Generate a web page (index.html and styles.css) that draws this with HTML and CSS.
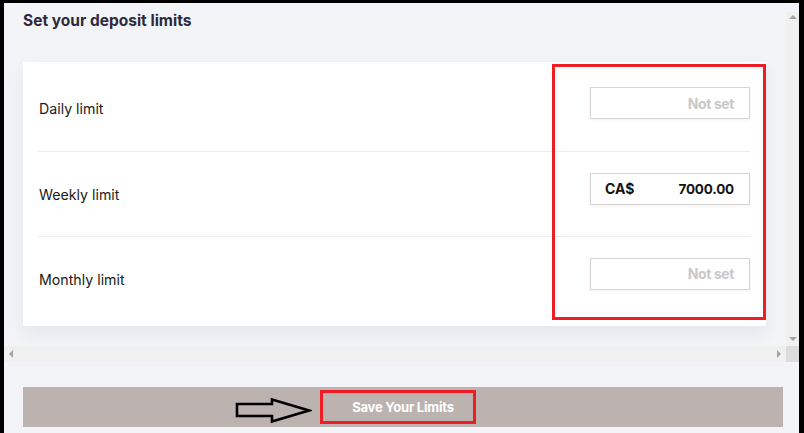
FILE: index.html
```html
<!doctype html>
<html lang="en">
  <head>
    <meta charset="utf-8">
    <title>Deposit limits</title>
    <link rel="stylesheet" href="styles.css">
  </head>
  <body>
    <div class="frame">
      <div class="scroller">
        <div class="viewport">
          <h2 class="title">Set your deposit limits</h2>

          <div class="card">
            <div class="row">
              <span class="label">Daily limit</span>
              <div class="field empty"><span class="value">Not set</span></div>
            </div>
            <div class="row">
              <span class="label">Weekly limit</span>
              <div class="field">
                <span class="currency">CA$</span>
                <span class="value">7000.00</span>
              </div>
            </div>
            <div class="row">
              <span class="label">Monthly limit</span>
              <div class="field empty"><span class="value">Not set</span></div>
            </div>
            <!-- annotation -->
            <div class="mark mark-fields"></div>
          </div>
        </div>

        <div class="vbar">
          <span class="arrow up"></span>
          <span class="arrow down"></span>
        </div>
        <div class="hbar">
          <span class="arrow left"></span>
          <span class="arrow right"></span>
        </div>
        <div class="corner"></div>
      </div>

      <div class="save">
        <svg class="pointer" width="77" height="25" viewBox="0 0 77 25">
          <polygon points="2,6 37,6 37,1.5 74,12.5 37,23.5 37,18 2,18" fill="none" stroke="#000" stroke-width="2.6" stroke-linejoin="miter"/>
        </svg>
        <span class="save-text">Save Your Limits</span>
        <div class="mark mark-save"></div>
      </div>
    </div>
  </body>
</html>
```

FILE: styles.css
```css
html {
  margin: 0;
  --page-bg: #f3f4f8;
  --bar-bg: #f0f0f0;
  --mark: #ee1c25;
}

body {
  margin: 0;
  background-color: #eef0f3;
  font-family: Inter, "Liberation Sans", sans-serif;
  -webkit-font-smoothing: antialiased;
}

.frame {
  height: 423px;
  border-style: solid;
  border-color: #000;
  border-width: 3px 5px 4px 4px;
  background-color: var(--page-bg);
  padding-top: 9px;
  box-sizing: content-box;
  overflow: hidden;
  display: flex;
  flex-direction: column;
}

.scroller {
  height: 350px;
  flex: none;
  display: grid;
  grid-template-columns: 1fr 13px;
  grid-template-rows: 1fr 16px;
}

.viewport {
  overflow: hidden;
  padding-left: 19px;
}

.title {
  margin: 0;
  height: 18px;
  line-height: 18px;
  font-size: 15.5px;
  font-weight: 700;
  color: #2e2a3d;
  letter-spacing: 0;
}

.card {
  position: relative;
  width: 743px;
  height: 264px;
  margin-top: 32px;
  box-sizing: border-box;
  padding: 4px 16px 5px 15px;
  background-color: #fff;
  box-shadow: 0 8px 18px rgba(40, 44, 70, 0.07);
}

.row {
  height: 85px;
  box-sizing: border-box;
  display: flex;
  align-items: center;
  justify-content: space-between;
}

.row + .row {
  border-top: 1px solid #ececec;
}

.label {
  font-size: 14.2px;
  color: #1a1a20;
  padding-left: 1px;
}

.field {
  width: 160px;
  height: 32px;
  margin-bottom: 11px;
  box-sizing: border-box;
  border: 1px solid #dad3d3;
  box-shadow: 0 1px 3px rgba(0, 0, 0, 0.06);
  display: flex;
  align-items: center;
  justify-content: space-between;
  padding: 0 15px 0 14px;
  font-size: 14px;
  font-weight: 700;
  color: #141414;
}

.field.empty {
  justify-content: flex-end;
}

.value {
  font-size: 13.5px;
  letter-spacing: -0.2px;
}

.field.empty .value {
  font-size: 14px;
  color: #c8c8c8;
  font-weight: 700;
  letter-spacing: -0.4px;
}

.mark {
  position: absolute;
  border: 3px solid var(--mark);
  box-sizing: border-box;
}

.mark-fields {
  left: 529px;
  top: 2px;
  width: 214px;
  height: 256px;
}

/* fake scrollbars */
.vbar,
.hbar,
.corner {
  position: relative;
  background-color: var(--bar-bg);
}

.corner {
  background-color: #dcdcdc;
}

.arrow {
  position: absolute;
  width: 0;
  height: 0;
  border: 4px solid transparent;
}

.arrow.up {
  left: 3px;
  top: 3px;
  border-top-width: 0;
  border-bottom: 4px solid #a3a3a3;
}

.arrow.down {
  left: 3px;
  bottom: 5px;
  border-bottom-width: 0;
  border-top: 4px solid #a3a3a3;
}

.arrow.left {
  left: 5px;
  top: 4px;
  border-left-width: 0;
  border-right: 4px solid #a3a3a3;
}

.arrow.right {
  right: 5px;
  top: 4px;
  border-right-width: 0;
  border-left: 4px solid #a3a3a3;
}

.save {
  position: relative;
  flex: none;
  height: 40px;
  margin: 25px 16px 0 19px;
  background-color: #bcb3b1;
  display: flex;
  align-items: center;
  justify-content: center;
}

.save-text {
  color: #fff;
  font-size: 13px;
  font-weight: 700;
  letter-spacing: -0.2px;
}

.pointer {
  position: absolute;
  left: 212px;
  top: 11px;
}

.mark-save {
  left: 297px;
  top: 3px;
  width: 156px;
  height: 34px;
}
```
